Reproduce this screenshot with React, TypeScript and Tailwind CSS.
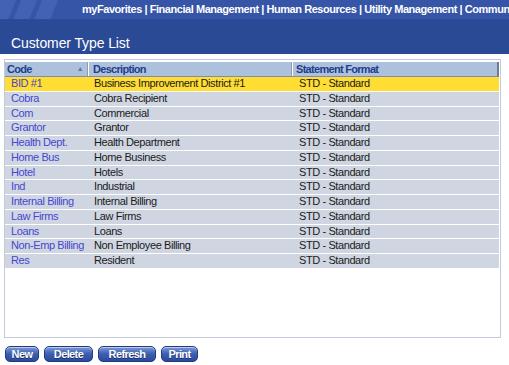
import React from "react";

const rows = [
  ["BID #1", "Business Improvement District #1"],
  ["Cobra", "Cobra Recipient"],
  ["Com", "Commercial"],
  ["Grantor", "Grantor"],
  ["Health Dept.", "Health Department"],
  ["Home Bus", "Home Business"],
  ["Hotel", "Hotels"],
  ["Ind", "Industrial"],
  ["Internal Billing", "Internal Billing"],
  ["Law Firms", "Law Firms"],
  ["Loans", "Loans"],
  ["Non-Emp Billing", "Non Employee Billing"],
  ["Res", "Resident"],
];

function Button({ label, w }: { label: string; w: string }) {
  return (
    <button
      className={`${w} h-[16px] rounded-[5px] border border-[#1f3a86] bg-gradient-to-b from-[#7f9ad8] via-[#3d5eb0] to-[#2b4a98] text-white font-bold text-[11px] tracking-[-0.6px] leading-[14px] shadow-[inset_0_1px_0_rgba(255,255,255,0.5)] [text-shadow:0_1px_0_#1c2f66]`}
    >
      {label}
    </button>
  );
}

export default function App() {
  return (
    <div className="w-[509px] h-[365px] bg-white overflow-hidden font-['Liberation_Sans',Arial,sans-serif]">
      {/* top nav */}
      <div className="relative h-[20px] bg-[#3655a6] border-b border-[#2d4b9c] flex items-center overflow-hidden">
        <svg className="absolute left-0 top-0" width="70" height="20" viewBox="0 0 70 20">
          <polygon points="0,0 16,0 8,20 0,20" fill="#4262b3" />
          <polygon points="21,0 37,0 29,20 13,20" fill="#4262b3" />
          <polygon points="42,0 58,0 50,20 34,20" fill="#4262b3" />
        </svg>
        <div className="relative pl-[82px] text-white font-bold text-[11px] tracking-[-0.45px] whitespace-nowrap">
          myFavorites | Financial Management | Human Resources | Utility Management | Community Development
        </div>
      </div>

      {/* title band */}
      <div className="h-[34px] bg-[#2b4a96] flex items-end pl-[11px] pb-[2px]">
        <h1 className="text-white text-[14px] tracking-[-0.1px] leading-[18px]">Customer Type List</h1>
      </div>

      {/* list box */}
      <div className="mx-[4px] mt-[5px] h-[279px] w-[497px] border border-[#c2cbdc] pt-[2px] pr-[1px]">
        <div className="flex h-[15px] bg-[#adc1dc] border-b border-[#7f8da6] border-r-2 border-r-[#6f7c94] text-[11px] font-bold tracking-[-0.7px] text-[#1e3e8e] leading-[14px]">
          <div className="w-[83px] pl-[2px] border-r border-[#8e9bb2] flex justify-between pr-[4px]">
            <span>Code</span>
            <span className="text-[7px] text-[#6b7689] leading-[14px]">▲</span>
          </div>
          <div className="w-[204px] pl-[4px] border-r border-[#8e9bb2] border-l border-l-white">Description</div>
          <div className="flex-1 pl-[3px] border-l border-l-white">Statement Format</div>
        </div>
        {rows.map(([code, desc], i) => (
          <div
            key={code}
            className={`flex h-[14.75px] border-b border-white text-[11px] tracking-[-0.4px] leading-[13px] ${
              i === 0 ? "bg-[#ffdd33]" : "bg-[#cfd6e2]"
            }`}
          >
            <div className="w-[83px] pl-[6px] whitespace-nowrap text-[#4646cf]">{code}</div>
            <div className="w-[204px] pl-[6px] text-[#1a1a1a] whitespace-nowrap">{desc}</div>
            <div className="flex-1 pl-[7px] text-[#1a1a1a]">STD - Standard</div>
          </div>
        ))}
      </div>

      {/* buttons */}
      <div className="flex gap-[5px] pl-[5px] mt-[8px]">
        <Button label="New" w="w-[34px]" />
        <Button label="Delete" w="w-[49px]" />
        <Button label="Refresh" w="w-[58px]" />
        <Button label="Print" w="w-[37px]" />
      </div>
    </div>
  );
}
